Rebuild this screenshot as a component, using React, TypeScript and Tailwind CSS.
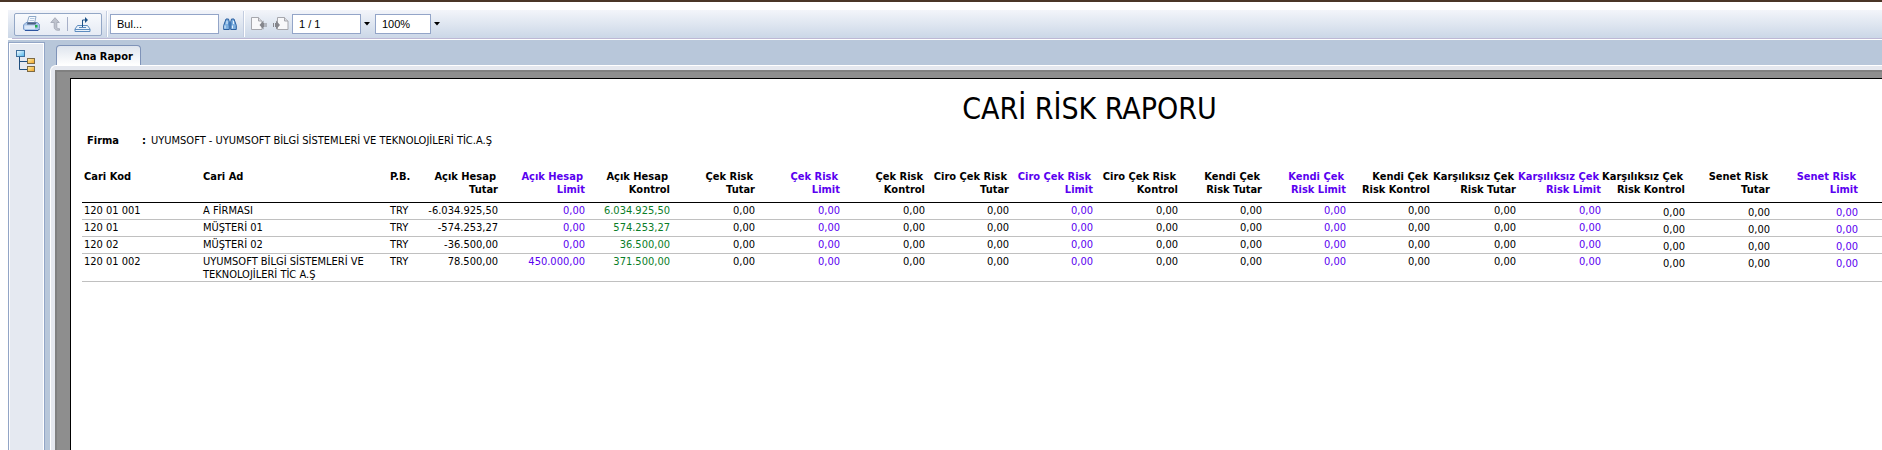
import type { ReactNode } from "react";

type Column = {
  lines: [string, string];
  width: string;
  limit?: boolean;
  low?: boolean;
};

const columns: Column[] = [
  { lines: ["Açık Hesap", "Tutar"], width: "w-[85px]" },
  { lines: ["Açık Hesap", "Limit"], width: "w-[87px]", limit: true },
  { lines: ["Açık Hesap", "Kontrol"], width: "w-[85px]" },
  { lines: ["Çek Risk", "Tutar"], width: "w-[85px]" },
  { lines: ["Çek Risk", "Limit"], width: "w-[85px]", limit: true },
  { lines: ["Çek Risk", "Kontrol"], width: "w-[85px]" },
  { lines: ["Ciro Çek Risk", "Tutar"], width: "w-[84px]" },
  { lines: ["Ciro Çek Risk", "Limit"], width: "w-[84px]", limit: true },
  { lines: ["Ciro Çek Risk", "Kontrol"], width: "w-[85px]" },
  { lines: ["Kendi Çek", "Risk Tutar"], width: "w-[84px]" },
  { lines: ["Kendi Çek", "Risk Limit"], width: "w-[84px]", limit: true },
  { lines: ["Kendi Çek", "Risk Kontrol"], width: "w-[84px]" },
  { lines: ["Karşılıksız Çek", "Risk Tutar"], width: "w-[86px]" },
  { lines: ["Karşılıksız Çek", "Risk Limit"], width: "w-[85px]", limit: true },
  { lines: ["Karşılıksız Çek", "Risk Kontrol"], width: "w-[84px]", low: true },
  { lines: ["Senet Risk", "Tutar"], width: "w-[85px]", low: true },
  { lines: ["Senet Risk", "Limit"], width: "w-[88px]", limit: true, low: true },
];

const rows = [
  { kod: "120 01 001", ad: "A FİRMASI", hesap: ["-6.034.925,50", "0,00", "6.034.925,50"] },
  { kod: "120 01", ad: "MÜŞTERİ 01", hesap: ["-574.253,27", "0,00", "574.253,27"] },
  { kod: "120 02", ad: "MÜŞTERİ 02", hesap: ["-36.500,00", "0,00", "36.500,00"] },
  {
    kod: "120 01 002",
    ad: "UYUMSOFT BİLGİ SİSTEMLERİ VE TEKNOLOJİLERİ TİC A.Ş",
    hesap: ["78.500,00", "450.000,00", "371.500,00"],
  },
];

function cellColor(col: Column, index: number) {
  if (col.limit) return "text-[#5a00f0]";
  if (index === 2) return "text-[#0a7d28]";
  return "text-black";
}

function IconButton({ label, children }: { label: string; children: ReactNode }) {
  return (
    <button type="button" aria-label={label} title={label} className="shrink-0">
      {children}
    </button>
  );
}

function PrinterIcon() {
  return (
    <svg width="17" height="16" viewBox="0 0 17 16">
      <path d="M6 .5h7l-1.500 7H4z" fill="#f8fbfe" stroke="#8fa9c8" />
      <path d="M7 2.500h4.500M6.500 4.500h4.500" stroke="#b4c8e0" />
      <path d="M3 6.500h11.500l2 2v4L15 14.500H2L.5 13V9z" fill="#a9c6ea" stroke="#7d9cc8" />
      <path d="M4.500 6.500h9L12.500 8.500H4z" fill="#4a5f80" />
      <path d="M1.500 9.500h10.500v3.500H2l-.5-.5z" fill="#dbe8f8" />
      <path d="M2 14.500h13l1.500-1.500" stroke="#2d55a0" fill="none" />
      <rect x="12" y="9" width="2.500" height="2.500" fill="#22b04c" />
    </svg>
  );
}

function UpArrowIcon() {
  return (
    <svg width="11" height="14" viewBox="0 0 11 14">
      <path
        d="M5 .7 9.300 5.500H6.800v4.500c0 1.200.8 1.700 2.700 1.700v1.600c-3.800.2-5.300-.9-5.300-3.300V5.500H.8z"
        fill="#bfc3cd"
        stroke="#9fa4b2"
        strokeWidth=".8"
      />
    </svg>
  );
}

function ExportIcon() {
  return (
    <svg width="17" height="15" viewBox="0 0 17 15">
      <path d="M3.500 8.500h10l2.500 3.500v2.500H1V12z" fill="#eaf2fb" stroke="#5d8cbf" />
      <path d="M1 12.500h15" stroke="#5d8cbf" />
      <path d="M5 10.500h7" stroke="#5d8cbf" />
      <path d="M8.500 10v-7h3" fill="none" stroke="#1d5288" />
      <path d="M11 0l3 3-3 3z" fill="#1d5288" />
    </svg>
  );
}

function BinocularsIcon() {
  return (
    <svg width="14" height="13" viewBox="0 0 14 13">
      <path d="M3 1h2.500l.8 3v7.500H.7V7.500z" fill="#7fb0e0" stroke="#2a5f9f" />
      <path d="M11 1H8.500l-.8 3v7.500h5.600V7.500z" fill="#7fb0e0" stroke="#2a5f9f" />
      <path d="M5.500 4.500h3v3h-3z" fill="#3f78b8" />
      <path d="M2 7.500v3M4 3v3M9.500 7.500v3M10.500 3v3" stroke="#e3f1fd" />
    </svg>
  );
}

function PageIcon({ next }: { next?: boolean }) {
  return (
    <svg width="16" height="14" viewBox="0 0 16 14">
      {next ? (
        <>
          <path d="M4.500.5h7l3.500 3.500v8.500H4.500z" fill="#f8f8fa" stroke="#a6a7ad" />
          <path d="M11.500.5v3.500h3.500" fill="#dcdde2" stroke="#a6a7ad" />
          <path d="M2 6h1V3.500L7 8l-4 4.500V10H2z" fill="#85868c" />
          <path d="M.5 6v4" stroke="#85868c" />
        </>
      ) : (
        <>
          <path d="M.5.5h7l3.500 3.500v8.500H.5z" fill="#f8f8fa" stroke="#a6a7ad" />
          <path d="M7.500.5v3.500h3.500" fill="#dcdde2" stroke="#a6a7ad" />
          <path d="M13.500 6h-1V3.500L8.500 8l4 4.500V10h1z" fill="#85868c" />
          <path d="M15 6v4" stroke="#85868c" />
        </>
      )}
    </svg>
  );
}

function Caret() {
  return (
    <svg width="6" height="4" viewBox="0 0 6 4">
      <path d="M0 0h6L3 3.500z" fill="#000" />
    </svg>
  );
}

function TreeIcon() {
  return (
    <svg width="20" height="22" viewBox="0 0 20 22">
      <defs>
        <linearGradient id="root-node" x1="0" y1="0" x2="1" y2="1">
          <stop offset="0" stopColor="#fff" />
          <stop offset="1" stopColor="#49b4ec" />
        </linearGradient>
        <linearGradient id="leaf-node" x1="0" y1="0" x2="1" y2="1">
          <stop offset="0" stopColor="#fff2b0" />
          <stop offset="1" stopColor="#f0a020" />
        </linearGradient>
      </defs>
      <path d="M3.500 6v13.500h8M3.500 11.500h8" fill="none" stroke="#1f4f7f" />
      <rect x=".5" y=".5" width="8" height="6" fill="url(#root-node)" stroke="#3f6f9c" />
      <rect x="11.500" y="8.500" width="7" height="5" fill="url(#leaf-node)" stroke="#7d6a45" />
      <rect x="11.500" y="16.500" width="7" height="5" fill="url(#leaf-node)" stroke="#7d6a45" />
    </svg>
  );
}

function Separator() {
  return <span className="h-[26px] w-0.5 shrink-0 border-l border-[#c3cde0] bg-white" />;
}

function Toolbar() {
  const field =
    "h-5 border border-[#93a5c8] bg-white px-1.5 font-['Liberation_Sans',sans-serif] text-[11px] text-black outline-none";

  return (
    <div className="ml-2 flex h-7 items-center bg-linear-to-b from-[#f3f5fa] to-[#cbd7e7] pl-1.5">
      <div className="flex h-[23px] w-[88px] items-center rounded-xs border border-[#93a7c6] bg-linear-to-b from-[#f8fafd] to-[#e6ebf4] pl-2">
        <IconButton label="Yazdır">
          <PrinterIcon />
        </IconButton>
        <span className="w-2.5" />
        <IconButton label="Üst rapor">
          <UpArrowIcon />
        </IconButton>
        <span className="mx-1.5 h-3.5 w-px bg-[#a7b0c8]" />
        <IconButton label="Dışa aktar">
          <ExportIcon />
        </IconButton>
      </div>
      <span className="w-1" />
      <Separator />
      <input aria-label="Bul" defaultValue="Bul..." className={field + " ml-0.5 w-[109px]"} />
      <span className="w-1" />
      <IconButton label="Ara">
        <BinocularsIcon />
      </IconButton>
      <span className="w-1.5" />
      <Separator />
      <span className="w-1.5" />
      <IconButton label="Önceki sayfa">
        <PageIcon />
      </IconButton>
      <span className="w-1.5" />
      <IconButton label="Sonraki sayfa">
        <PageIcon next />
      </IconButton>
      <input aria-label="Sayfa" defaultValue="1 / 1" className={field + " ml-[3px] w-[69px]"} />
      <button type="button" aria-label="Sayfa seç" className="flex h-5 w-3.5 items-center pl-[3px]">
        <Caret />
      </button>
      <input aria-label="Yakınlaştırma" defaultValue="100%" className={field + " w-14"} />
      <button type="button" aria-label="Yakınlaştırma seç" className="flex h-5 w-3.5 items-center pl-[3px]">
        <Caret />
      </button>
    </div>
  );
}

function ReportTable() {
  return (
    <table className="w-full table-fixed border-separate border-spacing-0 text-[11px] leading-[13px]">
      <thead>
        <tr className="h-[33px] align-top">
          <th className="w-[121px] border-b border-black p-0 pl-0.5 text-left">Cari Kod</th>
          <th className="w-[187px] border-b border-black p-0 text-left">Cari Ad</th>
          <th className="w-[23px] whitespace-nowrap border-b border-black p-0 text-left">P.B.</th>
          {columns.map((col, i) => (
            <th
              key={i}
              className={`${col.width} ${col.limit ? "text-[#5a00f0]" : "text-black"} whitespace-nowrap border-b border-black p-0 text-right`}
            >
              <span className="block pr-0.5">{col.lines[0]}</span>
              {col.lines[1]}
            </th>
          ))}
          <th className="border-b border-black p-0" />
        </tr>
      </thead>
      <tbody>
        {rows.map((row) => (
          <tr key={row.kod} className="h-[17px] align-top">
            <td className="border-b border-[#c0c0c0] pt-px pl-0.5">{row.kod}</td>
            <td className="border-b border-[#c0c0c0] pt-px">{row.ad}</td>
            <td className="border-b border-[#c0c0c0] pt-px">TRY</td>
            {columns.map((col, i) => (
              <td
                key={i}
                className={`${cellColor(col, i)} ${col.low ? "pt-[3px]" : "pt-px"} border-b border-[#c0c0c0] text-right`}
              >
                {row.hesap[i] ?? "0,00"}
              </td>
            ))}
            <td className="border-b border-[#c0c0c0] p-0" />
          </tr>
        ))}
      </tbody>
    </table>
  );
}

export default function App() {
  return (
    <div className="flex min-h-screen flex-col overflow-hidden border-t-2 border-[#4a3526] bg-white pt-2 font-['DejaVu_Sans_Condensed','DejaVu_Sans',sans-serif] text-black">
      <Toolbar />
      <div className="ml-3 h-0.5 border-b border-white bg-[#bdb8d4]" />

      <div className="ml-2 flex grow bg-[#b8c7da] pt-0.5">
        <aside className="w-[37px] shrink-0 border-x border-t border-[#92a5c6]">
          <div className="h-full border-x border-t border-white bg-[#e5e9f1] pt-1.5 pl-1.5">
            <IconButton label="Grup ağacı">
              <TreeIcon />
            </IconButton>
          </div>
        </aside>

        <main className="ml-[5px] flex min-w-0 grow flex-col pt-[3px]">
          <div className="flex pl-1.5">
            <button
              type="button"
              className="h-5 rounded-t-sm border border-b-0 border-[#7f93b8] bg-linear-to-b from-[#dfe5ee] to-white pt-0.5 pr-[7px] pl-[18px] text-[11px] leading-4 font-bold"
            >
              Ana Rapor
            </button>
          </div>
          <div className="flex grow rounded-tl-md border-t border-l border-white bg-[#e5e8ef] pt-1 pl-1">
            <div className="flex min-w-0 grow overflow-hidden border-t-2 border-l-2 border-[#808080] bg-[#8e8e8e] pt-1.5 pl-[13px]">
              <article className="min-w-[2038px] grow border-t border-l border-black bg-white px-[11px] pt-3">
                <h1 className="text-center text-[30px] leading-9">CARİ RİSK RAPORU</h1>
                <dl className="mt-[7px] mb-[22px] flex pl-[5px] text-[11px] leading-3.5">
                  <dt className="w-[55px] font-bold">Firma</dt>
                  <dd className="flex">
                    <b className="w-[9px]">:</b>
                    UYUMSOFT - UYUMSOFT BİLGİ SİSTEMLERİ VE TEKNOLOJİLERİ TİC.A.Ş
                  </dd>
                </dl>
                <ReportTable />
              </article>
            </div>
          </div>
        </main>
      </div>
    </div>
  );
}
